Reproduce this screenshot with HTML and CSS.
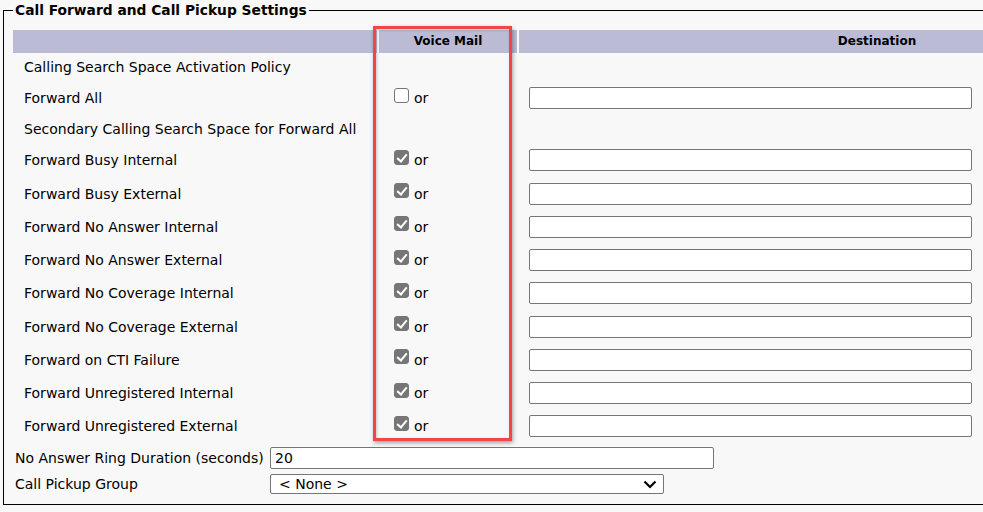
FILE: index.html
```html
<!DOCTYPE html>
<html>
<head>
<meta charset="utf-8">
<link rel="stylesheet" href="styles.css">
</head>
<body>
<fieldset class="box">
  <legend class="title">Call Forward and Call Pickup Settings</legend>
  <div class="grid">
    <div class="hd"></div>
    <div class="hd">Voice Mail</div>
    <div class="hd">Destination</div>

    <div class="row t"><div class="lbl">Calling Search Space Activation Policy</div><div></div><div></div></div>
    <div class="row i"><div class="lbl">Forward All</div><div class="vm"><span class="cb"></span>or</div><div class="dst"><span class="txt"></span></div></div>
    <div class="row t"><div class="lbl">Secondary Calling Search Space for Forward All</div><div></div><div></div></div>
    <div class="row i"><div class="lbl">Forward Busy Internal</div><div class="vm"><span class="cb on"></span>or</div><div class="dst"><span class="txt"></span></div></div>
    <div class="row i"><div class="lbl">Forward Busy External</div><div class="vm"><span class="cb on"></span>or</div><div class="dst"><span class="txt"></span></div></div>
    <div class="row i"><div class="lbl">Forward No Answer Internal</div><div class="vm"><span class="cb on"></span>or</div><div class="dst"><span class="txt"></span></div></div>
    <div class="row i"><div class="lbl">Forward No Answer External</div><div class="vm"><span class="cb on"></span>or</div><div class="dst"><span class="txt"></span></div></div>
    <div class="row i"><div class="lbl">Forward No Coverage Internal</div><div class="vm"><span class="cb on"></span>or</div><div class="dst"><span class="txt"></span></div></div>
    <div class="row i"><div class="lbl">Forward No Coverage External</div><div class="vm"><span class="cb on"></span>or</div><div class="dst"><span class="txt"></span></div></div>
    <div class="row i"><div class="lbl">Forward on CTI Failure</div><div class="vm"><span class="cb on"></span>or</div><div class="dst"><span class="txt"></span></div></div>
    <div class="row i"><div class="lbl">Forward Unregistered Internal</div><div class="vm"><span class="cb on"></span>or</div><div class="dst"><span class="txt"></span></div></div>
    <div class="row i"><div class="lbl">Forward Unregistered External</div><div class="vm"><span class="cb on"></span>or</div><div class="dst"><span class="txt"></span></div></div>
  </div>
  <div class="extra">
    <div class="erow"><div class="elbl">No Answer Ring Duration (seconds)</div><div class="etxt">20</div></div>
    <div class="erow"><div class="elbl">Call Pickup Group</div><div class="esel"><span>&lt; None &gt;</span><svg width="14" height="9" viewBox="0 0 14 9"><path d="M1.5 1.5 L7 7 L12.5 1.5" fill="none" stroke="#000" stroke-width="2.2"/></svg></div></div>
  </div>
</fieldset>
<div class="mark"></div>
</body>
</html>
```

FILE: styles.css
```css
html, body {
  margin: 0;
  padding: 0;
  background: #f8f8f8;
  overflow: hidden;
  width: 983px;
  height: 512px;
}
body {
  font-family: "DejaVu Sans", Verdana, sans-serif;
  font-size: 14px;
  color: #000;
  position: relative;
}
.box {
  margin: 2px 0 0 3px;
  width: 1300px;
  box-sizing: border-box;
  border: 1px solid #000;
  padding: 12px 0 10px 9px;
  height: 503px;
}
.title {
  font-weight: bold;
  font-size: 13.8px;
  padding: 0 2px;
  margin-left: 0;
}
.grid {
  display: grid;
  grid-template-columns: 364px 138px 716px;
  column-gap: 2px;
}
.hd {
  background: #bbbbd6;
  height: 23px;
  line-height: 23px;
  text-align: center;
  font-weight: bold;
  font-size: 12px;
}
.row {
  display: contents;
}
.row > div {
  display: flex;
  align-items: center;
}
.row.t > div { height: 28.8px; }
.row.i > div { height: 33.25px; }
.lbl {
  padding-left: 11px;
}
.vm {
  padding-left: 15px;
}
.cb {
  display: inline-block;
  width: 13px;
  height: 13px;
  border: 1px solid #767676;
  border-radius: 3px;
  background: #fff;
  margin-right: 5px;
  position: relative;
  top: -3px;
}
.cb.on {
  background: #767676;
}
.cb.on::after {
  content: "";
  position: absolute;
  left: 4px;
  top: 1px;
  width: 4px;
  height: 8px;
  border: solid #fff;
  border-width: 0 2.5px 2.5px 0;
  transform: rotate(40deg);
}
.dst {
  padding-left: 10px;
}
.txt {
  display: block;
  width: 443px;
  height: 22px;
  box-sizing: border-box;
  border: 1px solid #767676;
  border-radius: 2px;
  background: #fff;
}
.extra {
  padding-top: 2px;
}
.erow {
  display: flex;
  align-items: center;
  height: 26px;
}
.elbl {
  width: 255px;
  padding-left: 2px;
  box-sizing: border-box;
}
.etxt {
  width: 444px;
  height: 22px;
  box-sizing: border-box;
  border: 1px solid #767676;
  border-radius: 2px;
  background: #fff;
  padding-left: 4px;
  line-height: 20px;
  margin-left: 2px;
}
.esel {
  width: 394px;
  height: 20px;
  box-sizing: border-box;
  border: 1px solid #767676;
  border-radius: 2px;
  background: #fff;
  padding: 0 6px 0 8px;
  margin-left: 2px;
  display: flex;
  align-items: center;
  justify-content: space-between;
}
.mark {
  position: absolute;
  left: 373px;
  top: 26px;
  width: 139px;
  height: 415px;
  box-sizing: border-box;
  border: 3px solid #f04646;
  box-shadow: 1px 2px 4px rgba(0,0,0,0.35), inset 1px 1px 3px rgba(0,0,0,0.2);
}
```
